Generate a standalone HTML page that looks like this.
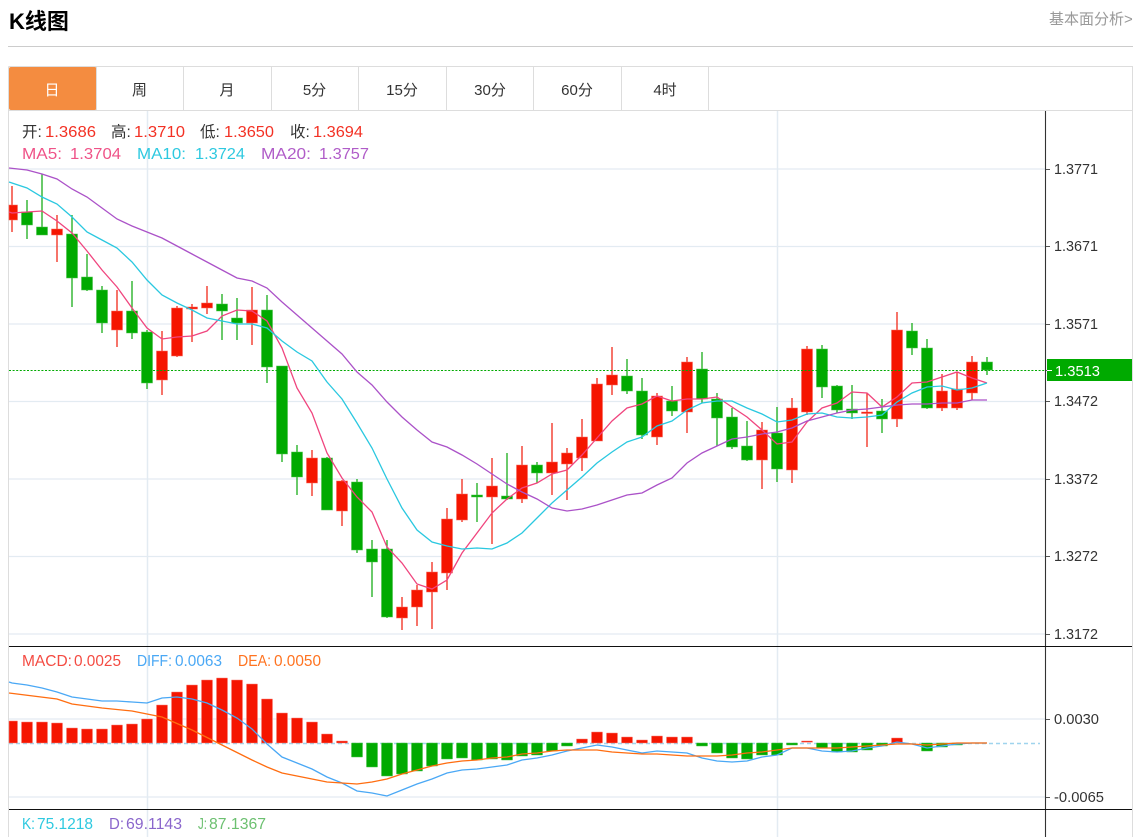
<!DOCTYPE html>
<html lang="zh"><head><meta charset="utf-8"><title>K线图</title>
<style>
html,body{margin:0;padding:0;background:#fff;width:1141px;height:837px;overflow:hidden}
svg{display:block;position:absolute;left:0;top:0}
text{font-family:"Liberation Sans","Noto Sans CJK SC",sans-serif}
.t{font-size:15px;fill:#333;text-anchor:middle}
.a{font-size:14.5px;fill:#333}
.h{font-size:15.5px}
</style></head><body>
<svg width="1141" height="837" viewBox="0 0 1141 837" xmlns="http://www.w3.org/2000/svg">
<text x="9" y="29" font-size="22" font-weight="700" fill="#000">K线图</text>
<text x="1049" y="24" font-size="15" fill="#999">基本面分析&gt;</text>
<path d="M8 46.5H1133" stroke="#ccc" fill="none"/>
<path d="M8.5 66.5H1132.5V837M8.5 66.5V837M9 110.5H1132" stroke="#ddd" fill="none"/>
<rect x="9" y="67" width="87.5" height="43" rx="2" fill="#f48c40"/>
<path d="M96.5 67V110M183.5 67V110M271.5 67V110M358.5 67V110M446.5 67V110M533.5 67V110M621.5 67V110M708.5 67V110" stroke="#ddd" fill="none"/>
<text class="t" x="52" y="95" style="fill:#fff">日</text>
<text class="t" x="139.5" y="95">周</text>
<text class="t" x="227" y="95">月</text>
<text class="t" x="314.5" y="95">5分</text>
<text class="t" x="402" y="95">15分</text>
<text class="t" x="490" y="95">30分</text>
<text class="t" x="577" y="95">60分</text>
<text class="t" x="665" y="95">4时</text>

<path d="M9 169H1046M9 246.5H1046M9 324H1046M9 401.5H1046M9 479H1046M9 556.5H1046M9 634H1046M9 719H1046M9 797H1046" stroke="#e3ebf2" stroke-width="1.3" fill="none"/>
<path d="M147.5 111V837M777.5 111V837" stroke="#e3ebf2" stroke-width="1.5" fill="none"/>

<path fill="none" stroke="#f22a1a" stroke-width="1.3" d="M12 186V232M57 215V262M117 290V347M162 331V395M177 306V357M192 304V342M207 286V314M252 287V345M312 450V496M342 480V526M402 597V630M417 585V626M432 562V629M447 508V590M462 479V522M492 458V544M522 446V503M552 423V495M567 448V500M582 419V471M597 378V441M612 347V395M657 393V445M687 357V433M762 422V489M792 398V483M807 346V415M867 393V447M897 312V427M942 374V411M957 372V410M972 356V400"/>
<path fill="#f51500" stroke="#f86a5e" stroke-width=".6" d="M9 205H17.5V220H9zM51.5 229h11v6h-11zM111.5 311h11v19h-11zM156.5 351h11v29h-11zM171.5 308h11v48h-11zM186.5 307h11v2h-11zM201.5 303h11v5h-11zM246.5 310h11v13h-11zM306.5 458h11v25h-11zM336.5 481h11v30h-11zM396.5 607h11v11h-11zM411.5 590h11v17h-11zM426.5 572h11v20h-11zM441.5 519h11v54h-11zM456.5 494h11v26h-11zM486.5 486h11v11h-11zM516.5 465h11v34h-11zM546.5 462h11v11h-11zM561.5 453h11v11h-11zM576.5 437h11v21h-11zM591.5 384h11v57h-11zM606.5 375h11v10h-11zM651.5 396h11v41h-11zM681.5 362h11v50h-11zM756.5 430h11v30h-11zM786.5 408h11v62h-11zM801.5 349h11v63h-11zM861.5 412h11v1.5h-11zM891.5 330h11v89h-11zM936.5 391h11v17h-11zM951.5 389h11v19h-11zM966.5 362h11v31h-11z"/>
<path fill="none" stroke="#1aae1a" stroke-width="1.3" d="M27 200V239M42 174V235M72 215V307M87 254V291M102 286V333M132 281V339M147 330V389M222 294V340M237 298V340M267 295V383M282 366V462M297 445V495M327 457V510M357 479V553M372 540V597M387 540V618M477 483V522M507 453V500M537 462V483M627 359V394M642 378V439M672 386V416M702 352V403M717 393V446M732 408V449M747 421V461M777 407V482M822 345V398M837 385V413M852 385V419M882 399V433M912 323V355M927 339V409M987 357V375"/>
<path fill="#00aa00" stroke="#4cc24c" stroke-width=".6" d="M21.5 212h11v13h-11zM36.5 227h11v8h-11zM66.5 234h11v44h-11zM81.5 277h11v13h-11zM96.5 290h11v33h-11zM126.5 311h11v22h-11zM141.5 332h11v51h-11zM216.5 304h11v7h-11zM231.5 318h11v5h-11zM261.5 310h11v57h-11zM276.5 366h11v88h-11zM291.5 452h11v25h-11zM321.5 458h11v52h-11zM351.5 482h11v68h-11zM366.5 549h11v13h-11zM381.5 549h11v68h-11zM471.5 495h11v2h-11zM501.5 496h11v3h-11zM531.5 465h11v8h-11zM621.5 376h11v15h-11zM636.5 391h11v44h-11zM666.5 401h11v10h-11zM696.5 369h11v30h-11zM711.5 399h11v19h-11zM726.5 417h11v30h-11zM741.5 446h11v14h-11zM771.5 433h11v36h-11zM816.5 349h11v38h-11zM831.5 386h11v24h-11zM846.5 409h11v4h-11zM876.5 411h11v8h-11zM906.5 331h11v17h-11zM921.5 348h11v60h-11zM981.5 362h11v8h-11z"/>
<path d="M9 370.5H1045" stroke="#00aa00" stroke-width="1" stroke-dasharray="2 1.6" fill="none"/>

<polyline fill="none" stroke="#f0457e" stroke-width="1.3" points="9,212 12,213 27,212 42,211 57,221 72,233 87,251 102,270 117,287 132,308 147,328 162,339 177,337 192,336 207,331 222,316 237,310 252,311 267,321 282,348 297,388 312,413 327,453 342,478 357,497 372,512 387,547 402,563 417,584 432,589 447,580 462,553 477,533 492,513 507,499 522,488 537,483 552,474 567,470 582,455 597,438 612,421 627,408 642,404 657,396 672,401 687,399 702,399 717,397 732,407 747,417 762,430 777,444 792,442 807,422 822,408 837,403 852,392 867,393 882,407 897,397 912,383 927,382 942,377 957,372 972,378 987,383"/>
<polyline fill="none" stroke="#2ac8e0" stroke-width="1.3" points="9,182 12,183 27,188 42,197 57,204 72,217 87,232 102,240 117,248 132,262 147,280 162,295 177,303 192,310 207,318 222,321 237,324 252,324 267,328 282,341 297,352 312,361 327,382 342,399 357,423 372,448 387,479 402,508 417,530 432,542 447,546 462,549 477,548 492,549 507,543 522,533 537,518 552,503 567,490 582,477 597,463 612,452 627,442 642,437 657,426 672,421 687,410 702,403 717,401 732,401 747,408 762,414 777,422 792,420 807,414 822,413 837,417 852,418 867,417 882,415 897,402 912,393 927,387 942,386 957,390 972,388 987,383"/>
<polyline fill="none" stroke="#ab52c8" stroke-width="1.3" points="9,168 27,170 42,174 57,179 72,189 87,197 102,208 117,219 132,226 147,232 162,238 177,246 192,254 207,262 222,270 237,278 252,281 267,288 282,302 297,315 312,328 327,341 342,354 357,372 372,385 387,402 402,417 417,430 432,442 447,447 462,455 477,464 492,474 507,484 522,492 537,499 552,508 567,511 582,509 597,505 612,500 627,495 642,493 657,485 672,478 687,463 702,453 717,446 732,439 747,437 762,434 777,432 792,428 807,421 822,417 837,413 852,410 867,409 882,407 897,405 912,404 927,404 942,403 957,403 972,400 987,400"/>

<path d="M9 743.5H1040" stroke="#9fd4ee" stroke-width="1.4" stroke-dasharray="4 3" fill="none"/>
<path fill="#f51500" stroke="#f8847a" stroke-width=".5" d="M9 721H17.5V743H9zM21.5 722h11v21h-11zM36.5 722h11v21h-11zM51.5 723h11v20h-11zM66.5 728h11v15h-11zM81.5 729h11v14h-11zM96.5 729h11v14h-11zM111.5 725h11v18h-11zM126.5 724h11v19h-11zM141.5 719h11v24h-11zM156.5 705h11v38h-11zM171.5 692h11v51h-11zM186.5 685h11v58h-11zM201.5 680h11v63h-11zM216.5 678h11v65h-11zM231.5 680h11v63h-11zM246.5 684h11v59h-11zM261.5 699h11v44h-11zM276.5 713h11v30h-11zM291.5 718h11v25h-11zM306.5 722h11v21h-11zM321.5 734h11v9h-11zM336.5 741h11v2h-11zM576.5 739h11v4h-11zM591.5 732h11v11h-11zM606.5 733h11v10h-11zM621.5 737h11v6h-11zM636.5 740h11v3h-11zM651.5 736h11v7h-11zM666.5 737h11v6h-11zM681.5 737h11v6h-11zM801.5 741h11v1.2h-11zM891.5 738h11v5h-11z"/>
<path fill="#00aa00" stroke="#4cc24c" stroke-width=".5" d="M351.5 743h11v14h-11zM366.5 743h11v24h-11zM381.5 743h11v33h-11zM396.5 743h11v31h-11zM411.5 743h11v28h-11zM426.5 743h11v23h-11zM441.5 743h11v16h-11zM456.5 743h11v15h-11zM471.5 743h11v17h-11zM486.5 743h11v16h-11zM501.5 743h11v17h-11zM516.5 743h11v13h-11zM531.5 743h11v12h-11zM546.5 743h11v8h-11zM561.5 743h11v3h-11zM696.5 743h11v3h-11zM711.5 743h11v10h-11zM726.5 743h11v15h-11zM741.5 743h11v16h-11zM756.5 743h11v12h-11zM771.5 743h11v12h-11zM786.5 743h11v2h-11zM816.5 743h11v5h-11zM831.5 743h11v9h-11zM846.5 743h11v9h-11zM861.5 743h11v7h-11zM876.5 743h11v3h-11zM921.5 743h11v8h-11zM936.5 743h11v4h-11zM951.5 743h11v2h-11z"/>
<polyline fill="none" stroke="#4aa8f5" stroke-width="1.3" points="9,682 12,683 27,685 42,688 57,692 72,697 87,699 102,701 117,701 132,702 147,703 162,698 177,697 192,699 207,703 222,710 237,718 252,729 267,744 282,757 297,763 312,769 327,777 342,783 357,791 372,793 387,796 402,790 417,784 432,779 447,773 462,770 477,769 492,767 507,765 522,760 537,758 552,755 567,751 582,748 597,745 612,747 627,750 642,753 657,751 672,752 687,753 702,758 717,761 732,762 747,761 762,757 777,755 792,748 807,748 822,751 837,752 852,751 867,748 882,746 897,742 912,744 927,748 942,746 957,744 972,743 987,743"/>
<polyline fill="none" stroke="#ff6d10" stroke-width="1.3" points="9,693 57,699 72,704 102,708 132,711 162,717 192,730 222,745 252,760 267,767 282,773 312,779 327,782 342,783 357,784 372,782 387,779 402,774 417,770 432,766 447,763 462,761 477,760 492,758 507,757 522,754 537,753 552,751 567,750 582,750 597,750 612,752 627,753 642,754 657,754 672,755 687,756 702,756 717,756 732,755 747,753 762,752 777,750 792,748 807,748 822,748 837,748 852,747 867,746 882,745 897,744 912,744 927,745 942,744 957,743 972,743 987,743"/>

<path d="M1045.5 111V837" stroke="#333" stroke-width="1.1" fill="none"/>
<path d="M9 646.5H1132M9 809.5H1132" stroke="#111" fill="none"/>
<path d="M1046 169.5H1050M1046 246.5H1050M1046 324.5H1050M1046 401.5H1050M1046 479.5H1050M1046 556.5H1050M1046 634.5H1050M1046 719.5H1050M1046 797.5H1050M1046 370.5H1050" stroke="#555" fill="none"/>
<rect x="1047" y="359" width="85" height="22" fill="#00aa00"/>
<path d="M1047 370.5H1052" stroke="#fff" fill="none"/>
<g class="a">
<text class="a" x="1054" y="174" textLength="44" lengthAdjust="spacingAndGlyphs">1.3771</text>
<text class="a" x="1054" y="251" textLength="44" lengthAdjust="spacingAndGlyphs">1.3671</text>
<text class="a" x="1054" y="329" textLength="44" lengthAdjust="spacingAndGlyphs">1.3571</text>
<text class="a" x="1055" y="376" textLength="45" lengthAdjust="spacingAndGlyphs" style="fill:#fff">1.3513</text>
<text class="a" x="1054" y="406" textLength="44" lengthAdjust="spacingAndGlyphs">1.3472</text>
<text class="a" x="1054" y="484" textLength="44" lengthAdjust="spacingAndGlyphs">1.3372</text>
<text class="a" x="1054" y="561" textLength="44" lengthAdjust="spacingAndGlyphs">1.3272</text>
<text class="a" x="1054" y="639" textLength="44" lengthAdjust="spacingAndGlyphs">1.3172</text>
<text class="a" x="1054" y="724" textLength="45" lengthAdjust="spacingAndGlyphs">0.0030</text>
<text class="a" x="1054" y="802" textLength="50" lengthAdjust="spacingAndGlyphs">-0.0065</text>
</g>
<text class="h" x="22" y="137" fill="#333">开:</text><text class="h" x="45" y="137" fill="#f33124" textLength="51" lengthAdjust="spacingAndGlyphs">1.3686</text>
<text class="h" x="111" y="137" fill="#333">高:</text><text class="h" x="134" y="137" fill="#f33124" textLength="51" lengthAdjust="spacingAndGlyphs">1.3710</text>
<text class="h" x="200" y="137" fill="#333">低:</text><text class="h" x="224" y="137" fill="#f33124" textLength="50" lengthAdjust="spacingAndGlyphs">1.3650</text>
<text class="h" x="290" y="137" fill="#333">收:</text><text class="h" x="313" y="137" fill="#f33124" textLength="50" lengthAdjust="spacingAndGlyphs">1.3694</text>
<text class="h" x="22" y="159" fill="#ef5388" textLength="40" lengthAdjust="spacingAndGlyphs">MA5:</text><text class="h" x="70" y="159" fill="#ef5388" textLength="51" lengthAdjust="spacingAndGlyphs">1.3704</text>
<text class="h" x="137" y="159" fill="#2ec9e0" textLength="49" lengthAdjust="spacingAndGlyphs">MA10:</text><text class="h" x="195" y="159" fill="#2ec9e0" textLength="50" lengthAdjust="spacingAndGlyphs">1.3724</text>
<text class="h" x="261" y="159" fill="#b05cc8" textLength="50" lengthAdjust="spacingAndGlyphs">MA20:</text><text class="h" x="319" y="159" fill="#b05cc8" textLength="50" lengthAdjust="spacingAndGlyphs">1.3757</text>
<text class="h" x="22" y="666" fill="#f44b42" textLength="50" lengthAdjust="spacingAndGlyphs">MACD:</text><text class="h" x="74" y="666" fill="#f44b42" textLength="47" lengthAdjust="spacingAndGlyphs">0.0025</text>
<text class="h" x="137" y="666" fill="#4aa8f5" textLength="35" lengthAdjust="spacingAndGlyphs">DIFF:</text><text class="h" x="175" y="666" fill="#4aa8f5" textLength="47" lengthAdjust="spacingAndGlyphs">0.0063</text>
<text class="h" x="238" y="666" fill="#ff7320" textLength="33" lengthAdjust="spacingAndGlyphs">DEA:</text><text class="h" x="274" y="666" fill="#ff7320" textLength="47" lengthAdjust="spacingAndGlyphs">0.0050</text>
<text class="h" x="22" y="829" fill="#2ec9e0" textLength="13" lengthAdjust="spacingAndGlyphs">K:</text><text class="h" x="37" y="829" fill="#2ec9e0" textLength="56" lengthAdjust="spacingAndGlyphs">75.1218</text>
<text class="h" x="109" y="829" fill="#8a66cc" textLength="15" lengthAdjust="spacingAndGlyphs">D:</text><text class="h" x="126" y="829" fill="#8a66cc" textLength="56" lengthAdjust="spacingAndGlyphs">69.1143</text>
<text class="h" x="198" y="829" fill="#6cc070" textLength="9" lengthAdjust="spacingAndGlyphs">J:</text><text class="h" x="209" y="829" fill="#6cc070" textLength="57" lengthAdjust="spacingAndGlyphs">87.1367</text>
</svg>
</body></html>
